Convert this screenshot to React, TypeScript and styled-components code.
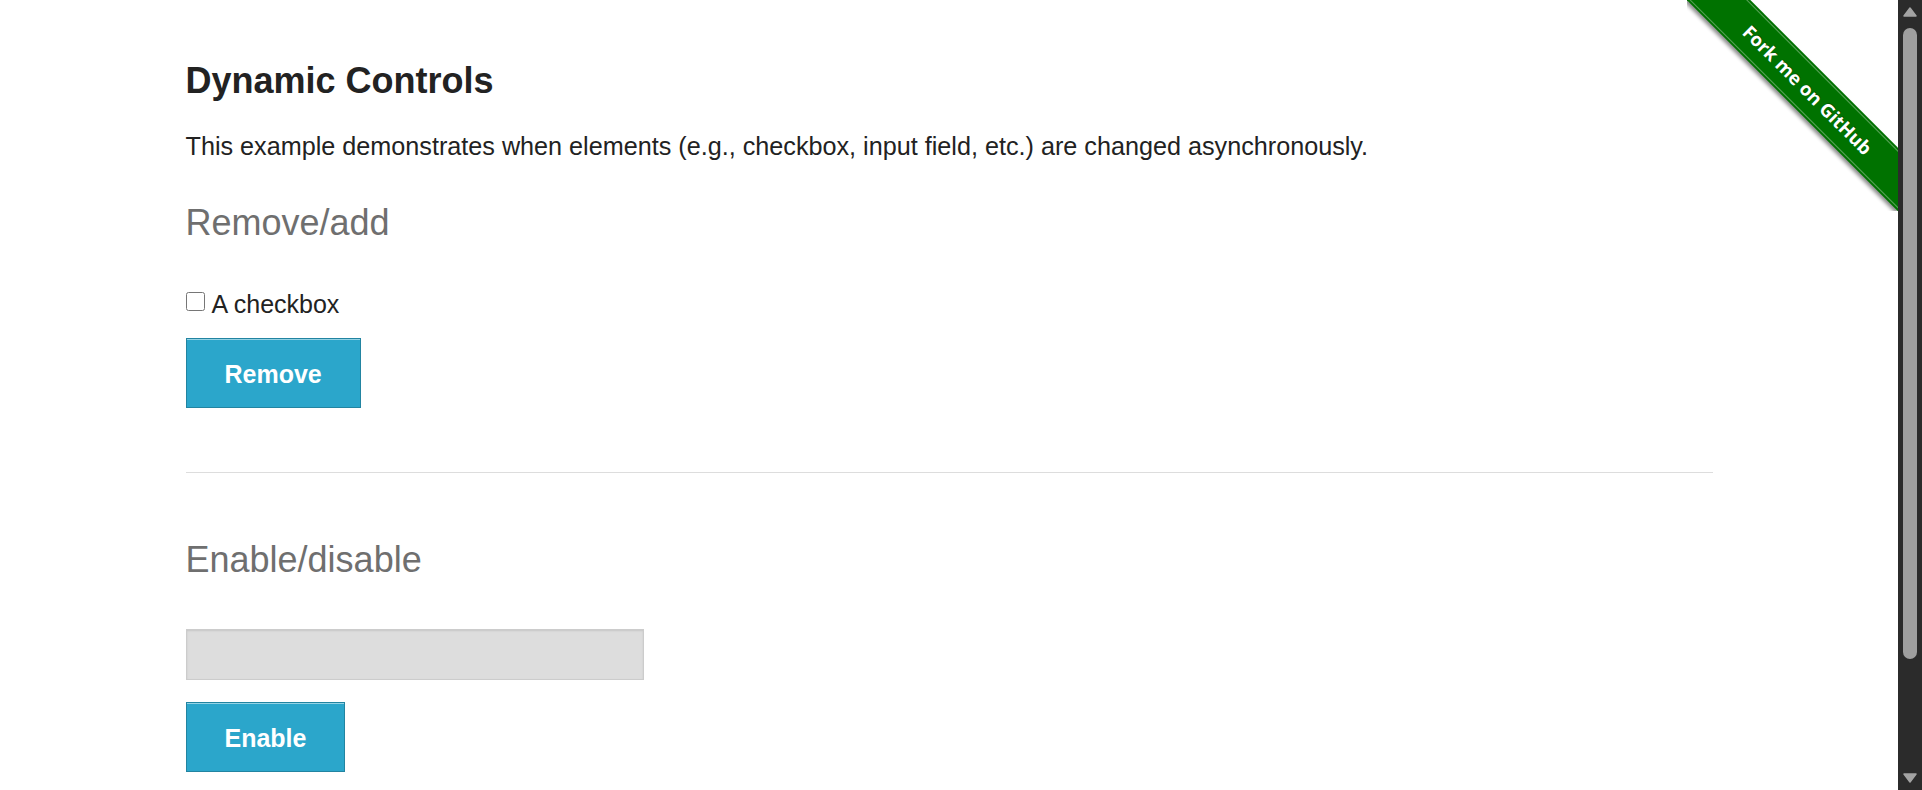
import React from 'react';
import styled, { createGlobalStyle } from 'styled-components';

const GlobalStyle = createGlobalStyle`
    html, body {
        margin: 0;
        padding: 0;
        overflow: hidden;
        background: #ffffff;
    }
    body {
        font-family: "Liberation Sans", Arial, Helvetica, sans-serif;
        color: #222222;
    }
`

const Viewport = styled.div`
    display: flex;
    height: 100vh;
    background: #ffffff;
`

const Main = styled.div`
    position: relative;
    flex: 1;
    min-width: 0;
    overflow: hidden;
`

const ScrollRail = styled.div`
    width: 24px;
    flex: none;
    display: flex;
    flex-direction: column;
    background: #2b2b2b;
`

const RailButton = styled.div`
    height: 24px;
    flex: none;
    display: flex;
    justify-content: center;
    padding-top: 7px;
    box-sizing: border-box;
`

const RailTrack = styled.div`
    flex: 1;
    display: flex;
    flex-direction: column;
    align-items: center;
`

const RailThumb = styled.div`
    width: 14px;
    height: 631px;
    margin-top: 4px;
    border-radius: 7px;
    background: #9f9f9f;
`

const Content = styled.div`
    width: 1527px;
    margin: 0 auto;
    padding-top: 59px;
`

const Title = styled.h3`
    margin: 0;
    font-size: 36px;
    line-height: 44px;
    font-weight: bold;
    color: #222222;
`

const Lead = styled.p`
    margin: 27px 0 0;
    font-size: 25.2px;
    line-height: 32px;
`

const SubHeader = styled.h4<{ $gap: number }>`
    margin: ${p => p.$gap}px 0 0;
    font-size: 36px;
    line-height: 44px;
    font-weight: normal;
    color: #6f6f6f;
`

const CheckRow = styled.div`
    display: flex;
    align-items: flex-start;
    gap: 7px;
    margin-top: 43px;
    font-size: 25px;
    line-height: 32px;
`

const CheckBox = styled.input`
    width: 19px;
    height: 19px;
    margin: 4px 0 0 0;
    flex: none;
`

const Button = styled.button<{ $gap: number }>`
    display: block;
    margin-top: ${p => p.$gap}px;
    padding: 21px 38px 19px;
    border: 1px solid #2284a1;
    background: #2ba6cb;
    box-shadow: inset 0 1px 0 rgba(255, 255, 255, 0.5);
    color: #ffffff;
    font-family: "Liberation Sans", Arial, sans-serif;
    font-size: 25px;
    font-weight: bold;
    line-height: 28px;
    cursor: pointer;
`

const Divider = styled.hr`
    margin: 64px 0 0;
    border: 0;
    border-top: 1px solid #dddddd;
    height: 0;
`

const TextInput = styled.input`
    display: block;
    box-sizing: border-box;
    width: 458px;
    height: 51px;
    margin-top: 47px;
    padding: 0 10px;
    border: 1px solid #cccccc;
    background: #dddddd;
    box-shadow: inset 0 1px 2px rgba(0, 0, 0, 0.1);
    font-family: "Liberation Sans", Arial, sans-serif;
    font-size: 22px;
`

const Ribbon = styled.a`
    position: absolute;
    top: 0;
    right: 0;
    width: 211px;
    height: 211px;
    overflow: hidden;
    text-decoration: none;
`

const RibbonBand = styled.span`
    position: absolute;
    left: -29px;
    top: 67px;
    width: 300px;
    height: 45px;
    background: #007200;
    transform: rotate(45deg);
    box-shadow: 0 3px 4px rgba(0, 0, 0, 0.45);
    display: flex;
    align-items: center;
    justify-content: center;
    color: #ffffff;
    font-family: "Open Sans", "DejaVu Sans", sans-serif;
    font-size: 18.5px;
    font-weight: 700;
    text-shadow: 0 -1px 0 rgba(0, 0, 0, 0.35);

    &::before {
        content: "";
        position: absolute;
        left: 0;
        right: 0;
        top: 2px;
        bottom: 2px;
        border-top: 1px solid rgba(255, 255, 255, 0.35);
        border-bottom: 1px solid rgba(255, 255, 255, 0.35);
    }
`

const Arrow = ({ down }: { down?: boolean }) => (
    <svg width="14" height="10" viewBox="0 0 14 10">
        <polygon
            points={down ? "1,1 13,1 7,9" : "7,1 13,9 1,9"}
            fill="#a3a3a3"
            stroke="#a3a3a3"
            strokeWidth="1.5"
            strokeLinejoin="round"
        />
    </svg>
)

const App = () => {

    return (
        <Viewport>
            <GlobalStyle />
            <Main>
                <Content>
                    <Title>Dynamic Controls</Title>
                    <Lead>This example demonstrates when elements (e.g., checkbox, input field, etc.) are changed asynchronously.</Lead>

                    <SubHeader $gap={39}>Remove/add</SubHeader>
                    <CheckRow>
                        <CheckBox type="checkbox" />
                        <span>A checkbox</span>
                    </CheckRow>
                    <Button $gap={18}>Remove</Button>

                    <Divider />

                    <SubHeader $gap={65}>Enable/disable</SubHeader>
                    <TextInput type="text" disabled />
                    <Button $gap={22}>Enable</Button>
                </Content>
                <Ribbon href="#">
                    <RibbonBand>Fork me on GitHub</RibbonBand>
                </Ribbon>
            </Main>
            <ScrollRail>
                <RailButton><Arrow /></RailButton>
                <RailTrack>
                    <RailThumb />
                </RailTrack>
                <RailButton><Arrow down /></RailButton>
            </ScrollRail>
        </Viewport>
    );
}

export default App;
